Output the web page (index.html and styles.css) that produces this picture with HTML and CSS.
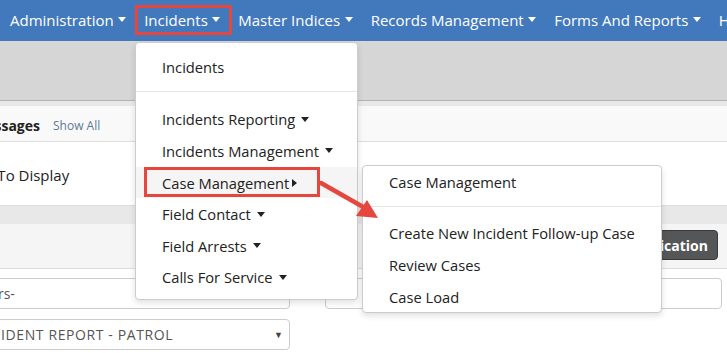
FILE: index.html
```html
<!DOCTYPE html>
<html>
<head>
<meta charset="utf-8">
<link rel="stylesheet" href="styles.css">
</head>
<body>
<nav class="topnav">
  <a class="nav-item">Administration <span class="caret"></span></a>
  <a class="nav-item active">Incidents <span class="caret"></span></a>
  <a class="nav-item">Master Indices <span class="caret"></span></a>
  <a class="nav-item">Records Management <span class="caret"></span></a>
  <a class="nav-item">Forms And Reports <span class="caret"></span></a>
  <a class="nav-item">Help</a>
</nav>
<div class="band"></div>
<div class="strip"></div>
<div class="msg-head"><span class="msg-title">Messages</span><span class="show-all">Show All</span></div>
<div class="msg-body"><span class="msg-text">No Messages To Display</span></div>
<div class="tool-strip"></div>
<div class="toolbar"><button class="btn-dark">Add Notification</button></div>
<div class="form">
  <div class="form-row">
    <div class="input input-left">-Select Filters-</div>
    <div class="input input-right"></div>
  </div>
  <div class="form-row">
    <div class="input select"><span class="sel-text">INCIDENT REPORT - PATROL</span><span class="sel-caret">▼</span></div>
  </div>
</div>

<div class="dropdown dd-main">
  <div class="dd-item">Incidents</div>
  <div class="dd-divider"></div>
  <div class="dd-item">Incidents Reporting<span class="caret dark"></span></div>
  <div class="dd-item">Incidents Management<span class="caret dark"></span></div>
  <div class="dd-item hover">Case Management<span class="caret-right"></span></div>
  <div class="dd-item">Field Contact<span class="caret dark"></span></div>
  <div class="dd-item">Field Arrests<span class="caret dark"></span></div>
  <div class="dd-item">Calls For Service<span class="caret dark"></span></div>
</div>

<div class="dropdown dd-sub">
  <div class="dd-item">Case Management</div>
  <div class="dd-divider sub"></div>
  <div class="dd-item">Create New Incident Follow-up Case</div>
  <div class="dd-item">Review Cases</div>
  <div class="dd-item">Case Load</div>
</div>

<div class="hl hl-nav"></div>
<div class="hl hl-case"></div>
<svg class="arrow" width="70" height="50" viewBox="0 0 70 50">
  <line x1="2" y1="3" x2="46" y2="28" stroke="#e5473f" stroke-width="4.5" stroke-linecap="round"/>
  <polygon points="59,38 37,36 48,20" fill="#e5473f"/>
</svg>
</body>
</html>
```
FILE: styles.css
```css
* { box-sizing: border-box; }
html, body { margin: 0; padding: 0; }
body {
  width: 727px;
  height: 353px;
  overflow: hidden;
  position: relative;
  font-family: "Open Sans", "Noto Sans", sans-serif;
  color: #222;
  background: #fff;
}
.topnav {
  display: flex;
  align-items: center;
  height: 41px;
  background: #4279bd;
  padding: 0 0 2px 1px;
  white-space: nowrap;
  overflow: hidden;
}
.nav-item {
  color: #fff;
  font-size: 15px;
  padding: 0 9px;
  display: flex;
  align-items: center;
  gap: 4.5px;
  flex-shrink: 0;
}
.caret {
  display: inline-block;
  width: 0; height: 0;
  border-left: 4px solid transparent;
  border-right: 4px solid transparent;
  border-top: 5px solid #fff;
}
.caret.dark { border-top-color: #222; margin-left: 6px; }
.caret-right {
  display: inline-block;
  width: 0; height: 0;
  border-top: 4.5px solid transparent;
  border-bottom: 4.5px solid transparent;
  border-left: 5px solid #222;
  margin-left: 3px;
}
.band {
  height: 60px;
  background: #d6d6d6;
  border-bottom: 1px solid #b3b3b3;
}
.strip { height: 5px; background: #e8e8e8; }
.msg-head {
  height: 36px;
  background: #f9f9f9;
  border-bottom: 1px solid #ddd;
  display: flex;
  align-items: center;
  gap: 13px;
  padding-top: 4px;
}
.msg-title { font-weight: 700; font-size: 14px; margin-left: -27px; }
.show-all { font-size: 12px; color: #5d7a95; }
.msg-body {
  height: 63px;
  display: flex;
  align-items: center;
  padding-top: 2px;
}
.msg-text { font-size: 15px; margin-left: -99px; }
.tool-strip {
  height: 19px;
  background: #e8e8e8;
  border-top: 1px solid #ddd;
}
.toolbar {
  height: 45px;
  background: #f5f5f5;
  border-bottom: 1px solid #ddd;
  display: flex;
  justify-content: flex-end;
  align-items: flex-start;
  padding: 6px 9px 0 0;
}
.btn-dark {
  height: 30px;
  background: #555658;
  border: 1px solid #3a3a3a;
  border-radius: 4px;
  color: #fff;
  font-family: inherit;
  font-weight: 700;
  font-size: 14px;
  padding: 0 9px;
}
.form { padding-top: 9px; display: flex; flex-direction: column; gap: 10px; }
.form-row { display: flex; gap: 35px; }
.input {
  height: 31px;
  border: 1px solid #ccc;
  border-radius: 4px;
  background: #fff;
  display: flex;
  align-items: center;
  font-size: 14px;
  color: #555;
  flex-shrink: 0;
}
.input-left { width: 377px; margin-left: -87px; padding-left: 10px; }
.input-right { width: 397px; }
.select { width: 323px; margin-left: -33px; padding-left: 8px; justify-content: space-between; padding-right: 6px; }
.sel-text { letter-spacing: 0.6px; }
.sel-caret { font-size: 9px; color: #444; }

.dropdown {
  position: absolute;
  background: #fff;
  border: 1px solid #ccc;
  border-radius: 4px;
  box-shadow: 0 3px 6px rgba(0,0,0,0.12);
}
.dd-main { left: 135px; top: 42px; width: 223px; padding: 8px 0 6px; }
.dd-sub { left: 362px; top: 165px; width: 300px; padding: 0; height: 148px; }
.dd-item {
  height: 31.6px;
  display: flex;
  align-items: center;
  padding-left: 26px;
  font-size: 14.7px;
  white-space: nowrap;
  color: #222;
}
.dd-sub .dd-item { height: 32px; }
.dd-item.hover { background: #f5f5f5; }
.dd-divider { height: 1px; background: #e5e5e5; margin: 8px 0 12px; }
.dd-divider.sub { margin: 8px 0 10px; }

.hl { position: absolute; border: 3px solid #e5473f; }
.hl-nav { left: 135px; top: 5px; width: 97px; height: 30px; }
.hl-case { left: 144px; top: 167px; width: 176px; height: 30px; }
.arrow { position: absolute; left: 319px; top: 180px; }
```
